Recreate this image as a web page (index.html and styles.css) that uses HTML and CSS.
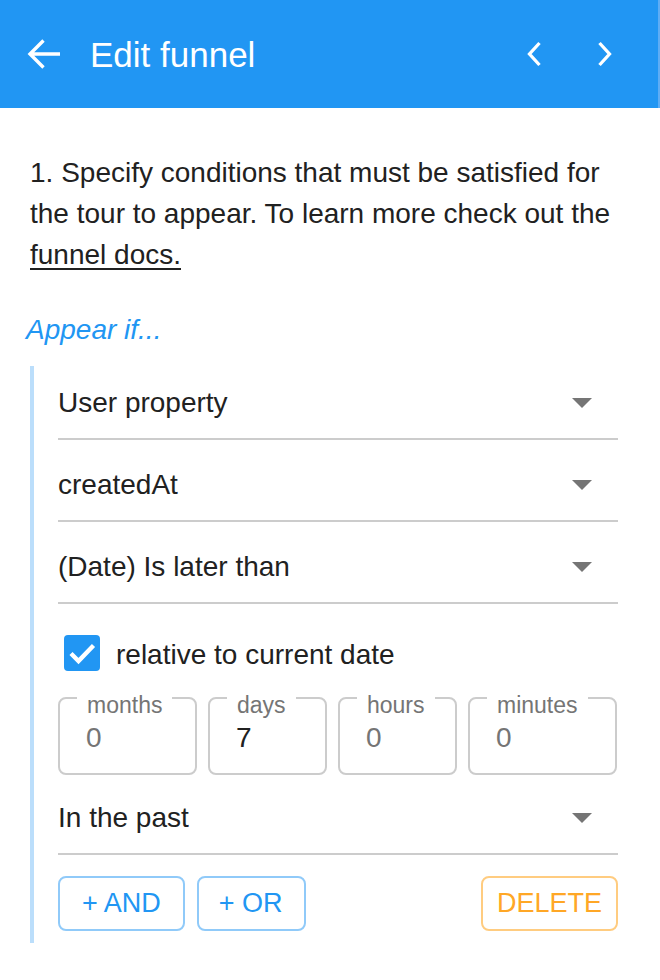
FILE: index.html
```html
<!DOCTYPE html>
<html lang="en">
<head>
<meta charset="utf-8">
<title>Edit funnel</title>
<link rel="stylesheet" href="styles.css">
</head>
<body>
<header class="app-bar">
  <svg class="back-icon" width="34" height="32" viewBox="0 0 34 32" aria-hidden="true">
    <path d="M16.5 2.5 L3 16 L16.5 29.5 M3 16 H33" fill="none" stroke="#fff" stroke-width="3.4"/>
  </svg>
  <h1 class="title">Edit funnel</h1>
  <div class="nav">
    <svg class="chev" width="16" height="26" viewBox="0 0 16 26" aria-hidden="true">
      <path d="M13.5 2 L3.5 13 L13.5 24" fill="none" stroke="#fff" stroke-width="3.3"/>
    </svg>
    <svg class="chev" width="16" height="26" viewBox="0 0 16 26" aria-hidden="true">
      <path d="M2.5 2 L12.5 13 L2.5 24" fill="none" stroke="#fff" stroke-width="3.3"/>
    </svg>
  </div>
</header>
<main class="content">
  <p class="intro">1. Specify conditions that must be satisfied for the tour to appear. To learn more check out the <a class="doc-link" href="#">funnel docs.</a></p>
  <div class="appear">Appear if...</div>
  <section class="condition">
    <div class="select"><span>User property</span><svg class="caret" width="20" height="10" viewBox="0 0 20 10"><polygon points="0,0 20,0 10,10" fill="#757575"/></svg></div>
    <div class="select"><span>createdAt</span><svg class="caret" width="20" height="10" viewBox="0 0 20 10"><polygon points="0,0 20,0 10,10" fill="#757575"/></svg></div>
    <div class="select"><span>(Date) Is later than</span><svg class="caret" width="20" height="10" viewBox="0 0 20 10"><polygon points="0,0 20,0 10,10" fill="#757575"/></svg></div>
    <label class="check-row">
      <svg class="checkbox" width="36" height="36" viewBox="0 0 36 36">
        <rect x="0" y="0" width="36" height="36" rx="4" fill="#2196f3"/>
        <polyline points="7,18.5 14.5,26 29.5,10.5" fill="none" stroke="#fff" stroke-width="4.4"/>
      </svg>
      <span class="check-label">relative to current date</span>
    </label>
    <div class="durations">
      <div class="field"><span class="field-label">months</span><span class="field-value muted">0</span></div>
      <div class="field"><span class="field-label">days</span><span class="field-value">7</span></div>
      <div class="field"><span class="field-label">hours</span><span class="field-value muted">0</span></div>
      <div class="field"><span class="field-label">minutes</span><span class="field-value muted">0</span></div>
    </div>
    <div class="select select-last"><span>In the past</span><svg class="caret" width="20" height="10" viewBox="0 0 20 10"><polygon points="0,0 20,0 10,10" fill="#757575"/></svg></div>
    <div class="actions">
      <button class="btn btn-blue btn-and">+ AND</button>
      <button class="btn btn-blue btn-or">+ OR</button>
      <button class="btn btn-orange">DELETE</button>
    </div>
  </section>
</main>
</body>
</html>
```
FILE: styles.css
```css
html, body {
  margin: 0;
  padding: 0;
  background: #fff;
}
body {
  font-family: "Liberation Sans", Arial, sans-serif;
  color: #212121;
  width: 660px;
}
.app-bar {
  box-sizing: border-box;
  width: 660px;
  height: 108px;
  background: #2196f3;
  border-right: 2px solid #5eadf5;
  display: flex;
  align-items: center;
  padding: 0 45px 0 27px;
}
.back-icon {
  display: block;
  flex: none;
}
.title {
  margin: 0 0 0 29px;
  font-size: 35px;
  font-weight: 400;
  line-height: 1;
  color: #fff;
}
.nav {
  margin-left: auto;
  display: flex;
  align-items: center;
  gap: 55px;
}
.chev {
  display: block;
}
.content {
  padding: 44px 30px 0;
}
.intro {
  margin: 0;
  font-size: 28px;
  line-height: 41px;
}
.doc-link {
  color: #212121;
  text-decoration: underline;
  text-decoration-thickness: 2px;
  text-underline-offset: 4px;
}
.appear {
  margin: 34px 0 0 -4px;
  font-size: 28px;
  line-height: 41px;
  font-style: italic;
  color: #2196f3;
}
.condition {
  margin-top: 16px;
  border-left: 4px solid #bbdefb;
  padding: 0 12px 12px 24px;
}
.select {
  height: 71px;
  display: flex;
  align-items: center;
  justify-content: space-between;
  border-bottom: 2px solid #cccccc;
  font-size: 28px;
  padding: 1px 26px 0 0;
  box-sizing: content-box;
}
.select + .select {
  margin-top: 8px;
}
.caret {
  display: block;
  flex: none;
}
.check-row {
  display: flex;
  align-items: center;
  gap: 16px;
  height: 36px;
  margin: 31px 0 0 6px;
  font-size: 28px;
}
.check-label {
  padding-top: 3px;
}
.checkbox {
  display: block;
  flex: none;
}
.durations {
  display: grid;
  grid-template-columns: 139px 119px 119px 149px;
  gap: 11px;
  margin-top: 26px;
}
.field {
  position: relative;
  box-sizing: border-box;
  height: 78px;
  border: 2px solid #cccccc;
  border-radius: 8px;
  padding: 25px 0 0 26px;
}
.field-label {
  position: absolute;
  top: -5px;
  left: 17px;
  padding: 0 10px;
  background: #fff;
  font-size: 23px;
  line-height: 23px;
  color: #757575;
}
.field-value {
  display: block;
  font-size: 28px;
  line-height: 28px;
  color: #212121;
}
.field-value.muted {
  color: #757575;
}
.select-last {
  margin-top: 6px;
}
.actions {
  display: flex;
  gap: 12px;
  margin-top: 21px;
}
.btn {
  height: 55px;
  box-sizing: border-box;
  border: 2px solid;
  border-radius: 8px;
  background: #fff;
  font-family: "Liberation Sans", Arial, sans-serif;
  font-size: 27px;
  line-height: 1;
}
.btn-and {
  padding: 0 22px;
}
.btn-or {
  padding: 0 21px 0 20px;
}
.btn-blue {
  border-color: #90caf9;
  color: #2196f3;
}
.btn-orange {
  margin-left: auto;
  border-color: #ffcc80;
  color: #ffa726;
  padding: 0 14px;
}
```
